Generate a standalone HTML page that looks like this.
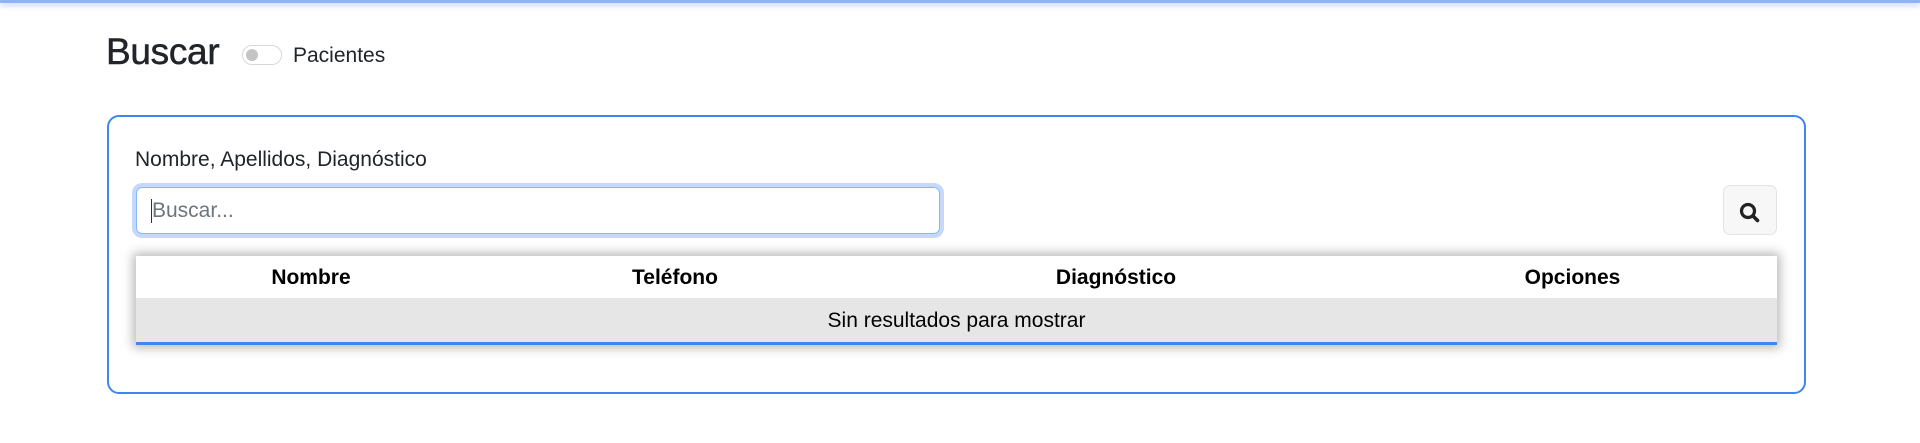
<!DOCTYPE html>
<html><head><meta charset="utf-8"><style>
body{margin:0;width:1920px;height:443px;background:#fff;font-family:"Liberation Sans",Arial,sans-serif;color:#212529;position:relative;overflow:hidden}
.topbar{position:absolute;left:0;top:0;width:1920px;height:3px;background:#8fb4f7;box-shadow:0 2px 6px rgba(80,140,250,.5)}
.title{position:absolute;left:106px;top:31px;font-size:37px;font-weight:500;letter-spacing:-0.3px;-webkit-text-stroke:0.5px #212529}
.sw{position:absolute;left:242px;top:45px;width:38px;height:18px;border:1px solid #d8d8d8;border-radius:10px;background:#fff}
.sw i{position:absolute;left:3px;top:3px;width:12px;height:12px;border-radius:50%;background:#c4c4c4}
.pac{position:absolute;left:293px;top:44px;font-size:21px}
.card{position:absolute;left:107px;top:115px;width:1695px;height:275px;border:2px solid #3f86f2;border-radius:12px}
.lbl{position:absolute;left:135px;top:148px;font-size:21px}
.inp{position:absolute;left:136px;top:187px;width:802px;height:45px;border:1px solid #86b7fe;border-radius:6px;box-shadow:0 0 0 4px #c6d9fb}
.inp span{position:absolute;left:14px;top:11px;font-size:21px;color:#6c757d;border-left:1px solid #333;padding-left:0}
.btn{position:absolute;left:1723px;top:185px;width:52px;height:48px;border:1px solid #e3e3e3;border-radius:7px;background:#f7f7f7}
.tbl{position:absolute;left:136px;top:256px;width:1641px;height:86px;border-bottom:3px solid #3f86f2;box-shadow:0 0 10px 3px rgba(0,0,0,.28);background:#fff}
.th{position:absolute;top:1px;height:42px;line-height:42px;font-weight:bold;font-size:21px;text-align:center;color:#000}
.row{position:absolute;top:42px;left:0;width:100%;height:44px;line-height:46px;background:#e6e6e6;text-align:center;font-size:21px;color:#000}
</style></head><body>
<div class="topbar"></div>
<div class="title">Buscar</div>
<div class="sw"><i></i></div>
<div class="pac">Pacientes</div>
<div class="card"></div>
<div class="lbl">Nombre, Apellidos, Diagnóstico</div>
<div class="inp"><span>Buscar...</span></div>
<div class="btn"><svg width="52" height="48" viewBox="0 0 52 48"><circle cx="24" cy="25" r="6.5" fill="none" stroke="#222" stroke-width="3.2"/><line x1="29" y1="30" x2="33.5" y2="34.5" stroke="#222" stroke-width="3.6" stroke-linecap="round"/></svg></div>
<div class="tbl">
<div class="th" style="left:0;width:350px">Nombre</div>
<div class="th" style="left:350px;width:378px">Teléfono</div>
<div class="th" style="left:728px;width:504px">Diagnóstico</div>
<div class="th" style="left:1232px;width:409px">Opciones</div>
<div class="row">Sin resultados para mostrar</div>
</div>
</body></html>
